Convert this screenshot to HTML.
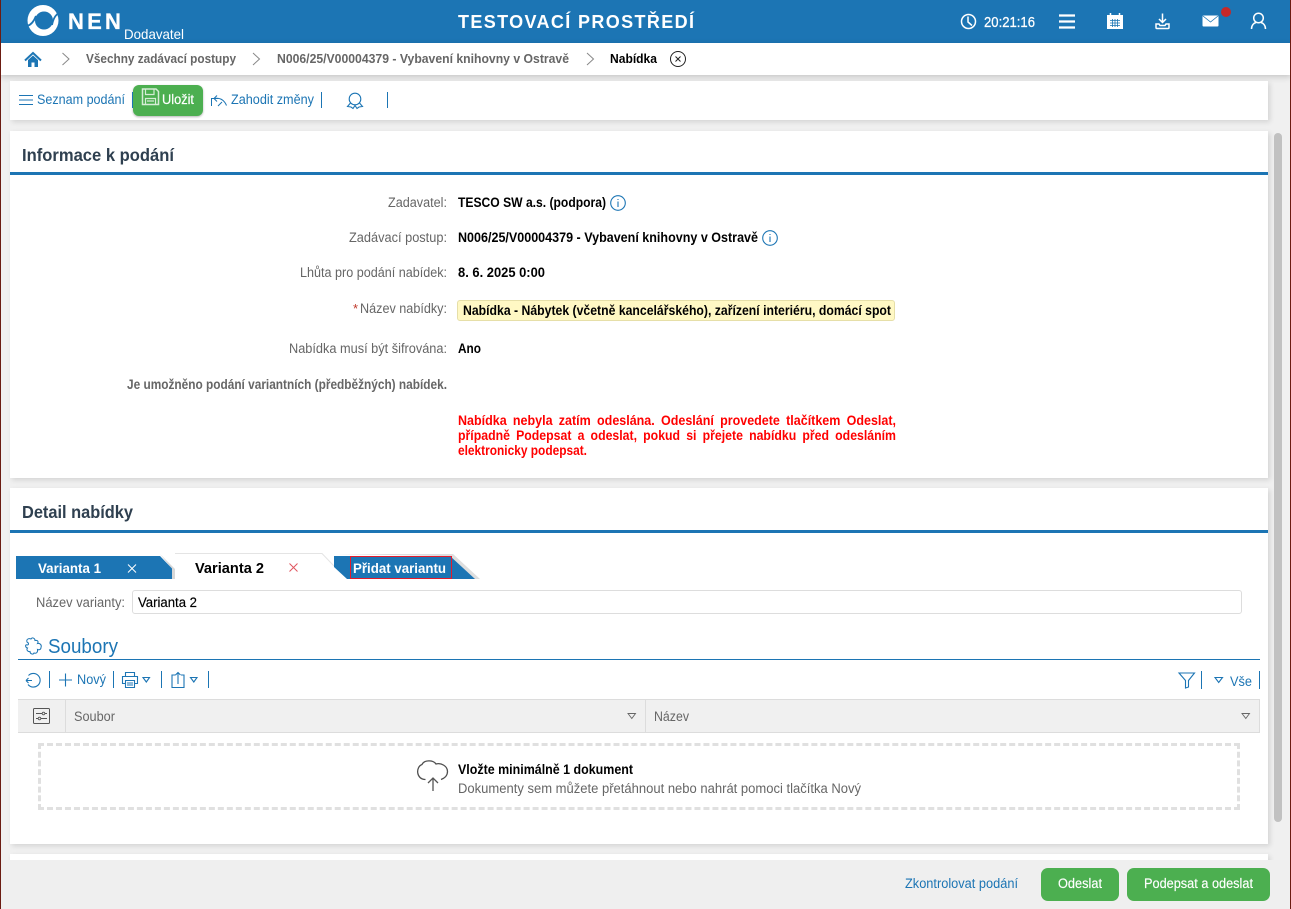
<!DOCTYPE html>
<html lang="cs"><head><meta charset="utf-8"><title>NEN</title>
<style>
html,body{margin:0;padding:0;width:1291px;height:909px;overflow:hidden;background:#f0f0f0}
.b{position:absolute}
.card{position:absolute;background:#fff;box-shadow:2px 2px 5px rgba(0,0,0,.12)}
svg{position:absolute;left:0;top:0}
text{font-family:"Liberation Sans",sans-serif;font-size:13.5px}
.g{fill:#666}.k{fill:#000}.bl{fill:#1c75b4}.w{fill:#fff}
.bd{font-weight:bold}
.r{fill:#f00;font-weight:bold;font-size:13.5px;word-spacing:3px}
.ic{fill:none;stroke:#1c75b4;stroke-width:1.1}
.iw{fill:none;stroke:#fff;stroke-width:1.5}
</style></head><body>
<div class="b" style="left:0;top:0;width:1291px;height:43px;background:#1c75b4"></div>
<div class="b" style="left:0;top:43px;width:1291px;height:32px;background:#fff;box-shadow:0 2px 6px rgba(0,0,0,.18)"></div>
<div class="card" style="left:10px;top:81px;width:1258px;height:39px"></div>
<div class="card" style="left:10px;top:131px;width:1258px;height:347px"></div>
<div class="card" style="left:10px;top:488px;width:1258px;height:356px"></div>
<div class="card" style="left:10px;top:854px;width:1258px;height:20px"></div>
<div class="b" style="left:10px;top:172px;width:1258px;height:3px;background:#1c75b4"></div>
<div class="b" style="left:10px;top:530px;width:1258px;height:3px;background:#1c75b4"></div>
<div class="b" style="left:1274px;top:133px;width:8px;height:689px;background:#c1c1c1;border-radius:4px"></div>
<div class="b" style="left:133px;top:85px;width:70px;height:31px;background:#4caf50;border-radius:6px;box-shadow:0 1px 2px rgba(0,0,0,.3)"></div>
<div class="b" style="left:457px;top:300px;width:436px;height:19px;background:#fff8c4;border:1px solid #e6dfa8;border-radius:3px"></div>
<div class="b" style="left:132px;top:590px;width:1108px;height:22px;background:#fff;border:1px solid #ddd;border-radius:3px"></div>
<div class="b" style="left:18px;top:659px;width:1242px;height:1px;background:#1c75b4"></div>
<div class="b" style="left:18px;top:699px;width:1241px;height:32px;background:#f0f0f0;border:1px solid #dcdcdc;border-left:0"></div>
<div class="b" style="left:65px;top:700px;width:1px;height:32px;background:#dcdcdc"></div>
<div class="b" style="left:645px;top:700px;width:1px;height:32px;background:#dcdcdc"></div>
<div class="b" style="left:38px;top:743px;width:1196px;height:61px;border:3px dashed #e0e0e0"></div>
<div class="b" style="left:0;top:860px;width:1291px;height:49px;background:#efefef"></div>
<div class="b" style="left:1041px;top:868px;width:78px;height:33px;background:#4caf50;border-radius:7px"></div>
<div class="b" style="left:1127px;top:868px;width:143px;height:33px;background:#4caf50;border-radius:7px"></div>

<svg width="1291" height="909" viewBox="0 0 1291 909">
<!-- tabs -->
<path d="M160 554L175 569V579H172V569Z" fill="#d8d8d8"/>
<path d="M16 556H160L172 568.500V579H16Z" fill="#1c75b4"/>
<path d="M175 554H321L333 567V579H175Z" fill="#fff"/>
<path d="M175 553.500H322L334 566" fill="none" stroke="#e4e4e4"/>
<path d="M336 554H453L480 579H470L440 556Z" fill="#dedede"/>
<path d="M334 556H450L475 579H347L334 567Z" fill="#1c75b4"/>
<rect x="350.500" y="556.500" width="101" height="22" fill="none" stroke="#e21b2c" stroke-width="1"/>

<!-- logo -->
<circle cx="43" cy="20.500" r="15.500" fill="#fff"/>
<circle cx="44" cy="20.500" r="9" fill="#1c75b4"/>
<path d="M27 26C31 25 34 21 36 16" fill="none" stroke="#1c75b4" stroke-width="1.800"/>
<path d="M59 13C55 15 53 20 52 25" fill="none" stroke="#1c75b4" stroke-width="1.800"/>
<text x="68" y="29" class="w bd" style="font-size:22px;letter-spacing:3.200px;stroke:#fff;stroke-width:.3">NEN</text>
<text x="124" y="39" class="w" style="font-size:14px" textLength="60" lengthAdjust="spacingAndGlyphs">Dodavatel</text>
<text x="458" y="28" class="w bd" style="font-size:18px" textLength="236" lengthAdjust="spacing">TESTOVACÍ PROSTŘEDÍ</text>

<!-- header right icons -->
<circle cx="968.500" cy="21.500" r="7" class="iw"/><path d="M968 16.500V22L972 25.500" class="iw"/>
<text x="984" y="27" class="w" style="font-size:14.500px;stroke:#fff;stroke-width:.25" textLength="51" lengthAdjust="spacingAndGlyphs">20:21:16</text>
<path d="M1059 15.500H1075M1059 21.500H1075M1059 27.500H1075" fill="none" stroke="#fff" stroke-width="2.200"/>
<rect x="1107.500" y="16.500" width="15" height="12" fill="#fff" stroke="#fff"/>
<path d="M1107 18h16v-3h-16z" fill="#fff"/><path d="M1110.500 13v3M1119.500 13v3" stroke="#fff" stroke-width="1.500"/>
<path d="M1110 20.500h10M1110 23h10M1110 25.500h10M1112.500 19v8M1115 19v8M1117.500 19v8" stroke="#1c75b4" stroke-width=".8" fill="none"/>
<path d="M1162.500 13.500V22M1159 19L1162.500 22.500L1166 19" class="iw" stroke-width="1.300"/>
<path d="M1156 24V27.500Q1156 28.500 1157 28.500H1168Q1169 28.500 1169 27.500V24H1166L1165 25.500H1160L1159 24Z" class="iw" stroke-width="1.300"/>
<rect x="1202.500" y="15.500" width="16" height="11" rx="1" fill="#fff"/>
<path d="M1203 16L1210.500 22L1218 16" fill="none" stroke="#1c75b4" stroke-width=".8"/>
<circle cx="1226" cy="12" r="5" fill="#c62828"/>
<circle cx="1258.500" cy="18" r="4.800" class="iw" stroke-width="1.200"/>
<path d="M1251.500 29C1251.500 25 1254 23 1256 22.500M1265.500 29C1265.500 25 1263 23 1261 22.500" class="iw" stroke-width="1.200"/>

<!-- breadcrumb -->
<path d="M25 60.500L33 53L41 60.500" fill="none" stroke="#1c75b4" stroke-width="2"/>
<path d="M28 60L33 55.500L38 60V67H34.500V62.500H31.500V67H28Z" fill="#1c75b4"/>
<path d="M62.500 53L69 59L62.500 65M253 53L259.500 59L253 65M587 53L593.500 59L587 65" fill="none" stroke="#888" stroke-width="1"/>
<text x="86" y="63" class="g bd" style="font-size:13px" textLength="150" lengthAdjust="spacingAndGlyphs">Všechny zadávací postupy</text>
<text x="277" y="63" class="g bd" style="font-size:13px" textLength="292" lengthAdjust="spacingAndGlyphs">N006/25/V00004379 - Vybavení knihovny v Ostravě</text>
<text x="610" y="63" class="k bd" style="font-size:13px" textLength="47" lengthAdjust="spacingAndGlyphs">Nabídka</text>
<circle cx="678" cy="59" r="7.500" fill="none" stroke="#222" stroke-width="1"/>
<path d="M675.500 56.500L680.500 61.500M680.500 56.500L675.500 61.500" stroke="#222" stroke-width="1"/>

<!-- toolbar -->
<path d="M19 95.500H33M19 100H33M19 104.500H33" class="ic"/>
<text x="37" y="104" class="bl" textLength="88" lengthAdjust="spacingAndGlyphs">Seznam podání</text>
<path d="M132.500 92V108M321.500 92V108M387.500 92V108" stroke="#1c75b4" stroke-width="1"/>
<path d="M142.500 89H156L158.500 91.500V104.500H142.500Z" fill="none" stroke="#d5ecd5" stroke-width="1.500"/>
<path d="M145.500 89.500V94.500H154V89.500M145.500 104V98.500H155.500V104M147 101H154" fill="none" stroke="#d5ecd5" stroke-width="1.200"/>
<text x="162" y="104" class="w" style="stroke:#fff;stroke-width:.2" textLength="32" lengthAdjust="spacingAndGlyphs">Uložit</text>
<path d="M211.500 106V98.500H218" fill="none" stroke="#1c75b4" stroke-width="1"/>
<path d="M217 95.500L214 98.500L217 101.500M214 98.500C220 97.500 224 99.500 226.500 105.500M218 106L222 102" fill="none" stroke="#1c75b4" stroke-width="1"/>
<text x="231" y="104" class="bl" textLength="83" lengthAdjust="spacingAndGlyphs">Zahodit změny</text>
<circle cx="355" cy="99" r="5.800" class="ic"/>
<path d="M350.500 103L347.500 106.500L351 107L353 108.500L355 105.500L357 108.500L359 107L362.500 106.500L359.500 103" class="ic" stroke-width="1"/>

<!-- section 1 -->
<text x="22" y="161" style="font-size:17.500px;fill:#2f4050;font-weight:bold" textLength="152" lengthAdjust="spacingAndGlyphs">Informace k podání</text>
<text x="388" y="207" class="g" textLength="59" lengthAdjust="spacingAndGlyphs">Zadavatel:</text>
<text x="349" y="242" class="g" textLength="98" lengthAdjust="spacingAndGlyphs">Zadávací postup:</text>
<text x="300" y="277" class="g" textLength="147" lengthAdjust="spacingAndGlyphs">Lhůta pro podání nabídek:</text>
<text x="353" y="313" style="fill:#c0392b;font-size:13px">*</text>
<text x="360" y="313" class="g" textLength="87" lengthAdjust="spacingAndGlyphs">Název nabídky:</text>
<text x="289" y="353" class="g" textLength="158" lengthAdjust="spacingAndGlyphs">Nabídka musí být šifrována:</text>
<text x="127" y="389" class="g bd" textLength="320" lengthAdjust="spacingAndGlyphs">Je umožněno podání variantních (předběžných) nabídek.</text>
<text x="458" y="207" class="k bd" textLength="148" lengthAdjust="spacingAndGlyphs">TESCO SW a.s. (podpora)</text>
<text x="458" y="242" class="k bd" textLength="300" lengthAdjust="spacingAndGlyphs">N006/25/V00004379 - Vybavení knihovny v Ostravě</text>
<text x="458" y="277" class="k bd" textLength="87" lengthAdjust="spacingAndGlyphs">8. 6. 2025 0:00</text>
<text x="463" y="315" class="k bd" textLength="428" lengthAdjust="spacingAndGlyphs">Nabídka - Nábytek (včetně kancelářského), zařízení interiéru, domácí spot</text>
<text x="458" y="353" class="k bd" textLength="23" lengthAdjust="spacingAndGlyphs">Ano</text>
<circle cx="618" cy="203" r="7.300" class="ic"/><path d="M618 201.500V207M618 199V200" class="ic" stroke-width=".9"/>
<circle cx="770" cy="238" r="7.300" class="ic"/><path d="M770 236.500V242M770 234V235" class="ic" stroke-width=".9"/>
<text x="458" y="425" class="r" textLength="438" lengthAdjust="spacingAndGlyphs">Nabídka nebyla zatím odeslána. Odeslání provedete tlačítkem Odeslat,</text>
<text x="458" y="440" class="r" textLength="438" lengthAdjust="spacingAndGlyphs">případně Podepsat a odeslat, pokud si přejete nabídku před odesláním</text>
<text x="458" y="455" class="r" style="word-spacing:0" textLength="129" lengthAdjust="spacingAndGlyphs">elektronicky podepsat.</text>

<!-- section 2 -->
<text x="22" y="518" style="font-size:17.500px;fill:#2f4050;font-weight:bold" textLength="111" lengthAdjust="spacingAndGlyphs">Detail nabídky</text>
<text x="38" y="573" class="w bd" textLength="63" lengthAdjust="spacingAndGlyphs">Varianta 1</text>
<path d="M128 564.500L136 572.500M136 564.500L128 572.500" stroke="#fff" stroke-width="1"/>
<text x="195" y="573" class="k bd" style="font-size:15px" textLength="69" lengthAdjust="spacingAndGlyphs">Varianta 2</text>
<path d="M289.500 563.500L297.500 571.500M297.500 563.500L289.500 571.500" stroke="#e0555f" stroke-width="1"/>
<text x="353" y="573" class="w bd" textLength="93" lengthAdjust="spacingAndGlyphs">Přidat variantu</text>
<text x="36" y="607" class="g" textLength="89" lengthAdjust="spacingAndGlyphs">Název varianty:</text>
<text x="138" y="607" class="k" style="stroke:#000;stroke-width:.15" textLength="59" lengthAdjust="spacingAndGlyphs">Varianta 2</text>

<path d="M27 642C26 639 29 638 31 639C32 637 35 638 35 640.500C37 640 39 641 37.500 643.500C40 643 42 645 41 647.500C41 650 38.500 650 37.500 649.500C38 652 36.500 654 34 653C33 655 30 654 30 651.500C28 652 26 650 27.500 648C25 647.500 25 644 27 645C29 645 29 643 27 642Z" fill="none" stroke="#1c75b4" stroke-width="1"/>
<text x="48" y="653" class="bl" style="font-size:20px" textLength="70" lengthAdjust="spacingAndGlyphs">Soubory</text>

<!-- grid toolbar -->
<path d="M28.500 675.500A6.800 6.800 0 1 1 28 684.500" class="ic"/><path d="M26 680.500H32M26 680.500L28.500 678M26 680.500L28.500 683" class="ic" stroke-width=".9"/>
<path d="M49.500 671V688M113.500 671V688M161.500 671V688M208.500 671V688M1201.500 671V689M1259.500 671V689" stroke="#1c75b4" stroke-width="1"/>
<path d="M65.500 673.500V686.500M59 680H72" class="ic"/>
<text x="77" y="684" class="bl" textLength="29" lengthAdjust="spacingAndGlyphs">Nový</text>
<path d="M125.500 676.500V672.500H134.500V676.500M125.500 683.500H122.500V676.500H137.500V683.500H134.500M125.500 680.500H134.500V687.500H125.500ZM127 683H133M127 685H133" class="ic"/>
<path d="M143 677.500H149.500L146.300 682Z" class="ic" stroke-width=".8"/>
<path d="M175.500 675H172V687.500H184V675H181M178 684V672.500M175.500 675L178 672.500L180.500 675" class="ic"/>
<path d="M190.500 677.500H197L193.800 682Z" class="ic" stroke-width=".8"/>
<path d="M1179 673H1194.500L1188.500 680.500V687L1185.500 688V680.500Z" class="ic"/>
<path d="M1215 677.500H1222.500L1218.700 682.500Z" class="ic" stroke-width=".8"/>
<text x="1230" y="686" class="bl" textLength="22" lengthAdjust="spacingAndGlyphs">Vše</text>

<!-- grid header -->
<rect x="33.500" y="708.500" width="16" height="15" rx="1" fill="none" stroke="#555" stroke-width="1"/>
<path d="M36 713.500H47M36 718.500H47" stroke="#555" stroke-width="1"/>
<circle cx="43.500" cy="713.500" r="1.300" fill="#f0f0f0" stroke="#555" stroke-width=".8"/>
<circle cx="39.500" cy="718.500" r="1.300" fill="#f0f0f0" stroke="#555" stroke-width=".8"/>
<text x="74" y="721" class="g" textLength="41" lengthAdjust="spacingAndGlyphs">Soubor</text>
<text x="654" y="721" class="g" textLength="35" lengthAdjust="spacingAndGlyphs">Název</text>
<path d="M628 713.500H635.500L631.800 718.500Z" fill="none" stroke="#666" stroke-width=".9"/>
<path d="M1242 713.500H1249.500L1245.800 718.500Z" fill="none" stroke="#666" stroke-width=".9"/>

<!-- drop zone -->
<path d="M425.500 779.500C416 779.500 415.500 767 422 764.500C424 760 433 759.500 436 764C441 762.500 447.500 766 447.500 771.500C447.500 776 444 778.500 441 779.500" fill="none" stroke="#4f4f4f" stroke-width="1.300"/>
<path d="M433 791V778M428 783L433 778L438 783" fill="none" stroke="#555" stroke-width="1.300"/>
<text x="458" y="774" class="k bd" textLength="175" lengthAdjust="spacingAndGlyphs">Vložte minimálně 1 dokument</text>
<text x="458" y="793" class="g" textLength="403" lengthAdjust="spacingAndGlyphs">Dokumenty sem můžete přetáhnout nebo nahrát pomoci tlačítka Nový</text>

<!-- footer -->
<text x="905" y="888" class="bl" textLength="113" lengthAdjust="spacingAndGlyphs">Zkontrolovat podání</text>
<text x="1058" y="888" class="w" style="stroke:#fff;stroke-width:.15" textLength="44" lengthAdjust="spacingAndGlyphs">Odeslat</text>
<text x="1144" y="888" class="w" style="stroke:#fff;stroke-width:.15" textLength="109" lengthAdjust="spacingAndGlyphs">Podepsat a odeslat</text>
</svg>
<div class="b" style="left:0;top:0;width:1px;height:909px;background:#6b1c12"></div>
<div class="b" style="left:1290px;top:0;width:1px;height:909px;background:#6b1c12"></div>
</body></html>
